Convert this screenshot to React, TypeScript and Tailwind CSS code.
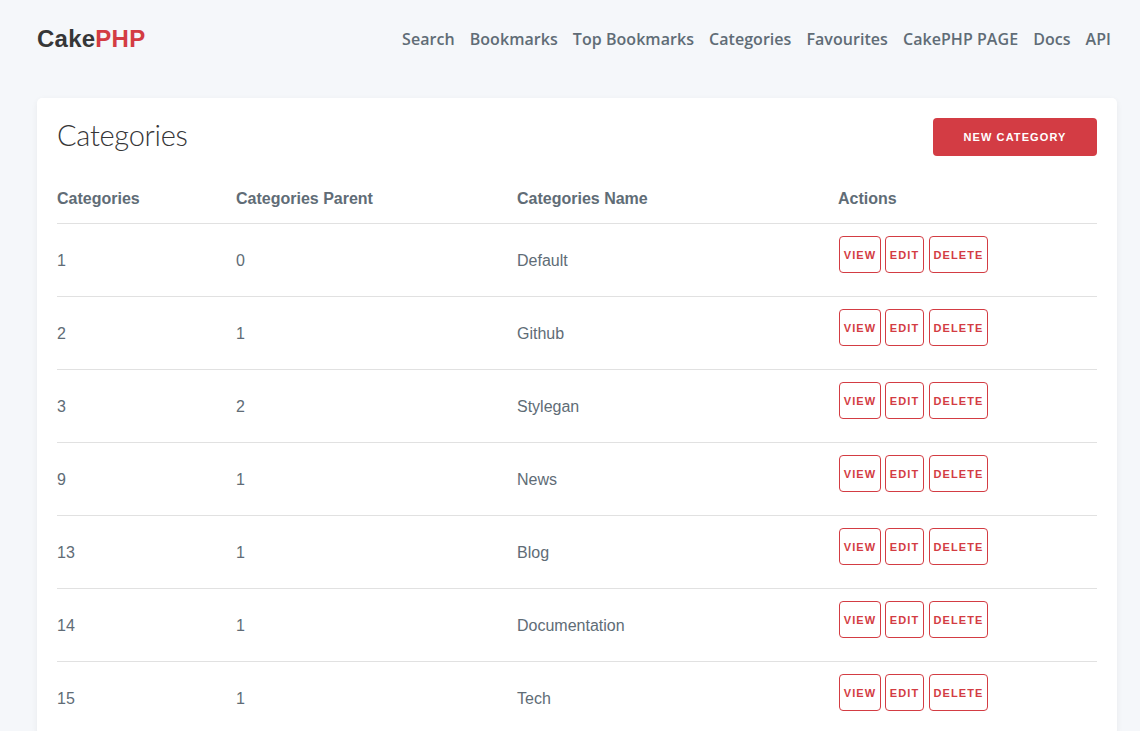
const rows = [
  { id: 1, parent: 0, name: 'Default' },
  { id: 2, parent: 1, name: 'Github' },
  { id: 3, parent: 2, name: 'Stylegan' },
  { id: 9, parent: 1, name: 'News' },
  { id: 13, parent: 1, name: 'Blog' },
  { id: 14, parent: 1, name: 'Documentation' },
  { id: 15, parent: 1, name: 'Tech' },
];

const navItems = ['Search', 'Bookmarks', 'Top Bookmarks', 'Categories', 'Favourites', 'CakePHP PAGE', 'Docs', 'API'];

const cols = 'grid grid-cols-[179px_281px_321px_259px]';

function ActionButton({ label }: { label: string }) {
  return (
    <a className="flex h-[37px] items-center justify-center rounded-[4px] border border-[#d33c43] pt-[2px] text-[11px] font-bold tracking-[0.1em] text-[#d33c43]">
      {label}
    </a>
  );
}

export default function App() {
  return (
    <div className="min-h-screen bg-[#f5f7fa] font-['Liberation_Sans',Arial,sans-serif] text-[#606c76]">
      {/* top nav */}
      <nav className="flex h-[78px] items-center justify-between pl-[37px] pr-[29px]">
        <a className="text-[24px] font-bold tracking-[0.01em] leading-none text-[#363637]">
          Cake<span className="text-[#d33c43]">PHP</span>
        </a>
        <div className="flex items-center gap-[15px] font-['Open_Sans',sans-serif] text-[16px] font-semibold tracking-[0.003em] text-[#606c76]">
          {navItems.map((item) => (
            <a key={item}>{item}</a>
          ))}
        </div>
      </nav>

      <main className="pl-[37px] pr-[23px] pt-[20px]">
        <div className="rounded-[5px] bg-white px-[20px] pt-[20px] shadow-[0_2px_6px_rgba(0,0,0,0.06)]">
          <div className="flex items-start justify-between">
            <h3 className="font-['Lato',sans-serif] text-[29px] font-light leading-[34px] tracking-[-0.01em] text-[#363637]">
              Categories
            </h3>
            <button className="h-[38px] w-[164px] rounded-[4px] bg-[#d33c44] pt-[1px] text-[11px] font-bold tracking-[0.1em] text-white">
              NEW CATEGORY
            </button>
          </div>

          <div className="mt-[18px]">
            <div className={`${cols} h-[50px] items-center border-b border-[#e1e1e1] text-[16px] font-bold`}>
              <div>Categories</div>
              <div>Categories Parent</div>
              <div>Categories Name</div>
              <div>Actions</div>
            </div>
            {rows.map((r) => (
              <div key={r.id} className={`${cols} h-[73px] items-center border-b border-[#e1e1e1] pt-[1px] text-[16px]`}>
                <div>{r.id}</div>
                <div>{r.parent}</div>
                <div>{r.name}</div>
                <div className="flex gap-[4px] self-start pl-[1px] pt-[11px]">
                  <div className="w-[42px]"><ActionButton label="VIEW" /></div>
                  <div className="w-[39px]"><ActionButton label="EDIT" /></div>
                  <div className="ml-[1px] w-[59px]"><ActionButton label="DELETE" /></div>
                </div>
              </div>
            ))}
          </div>
        </div>
      </main>
    </div>
  );
}
